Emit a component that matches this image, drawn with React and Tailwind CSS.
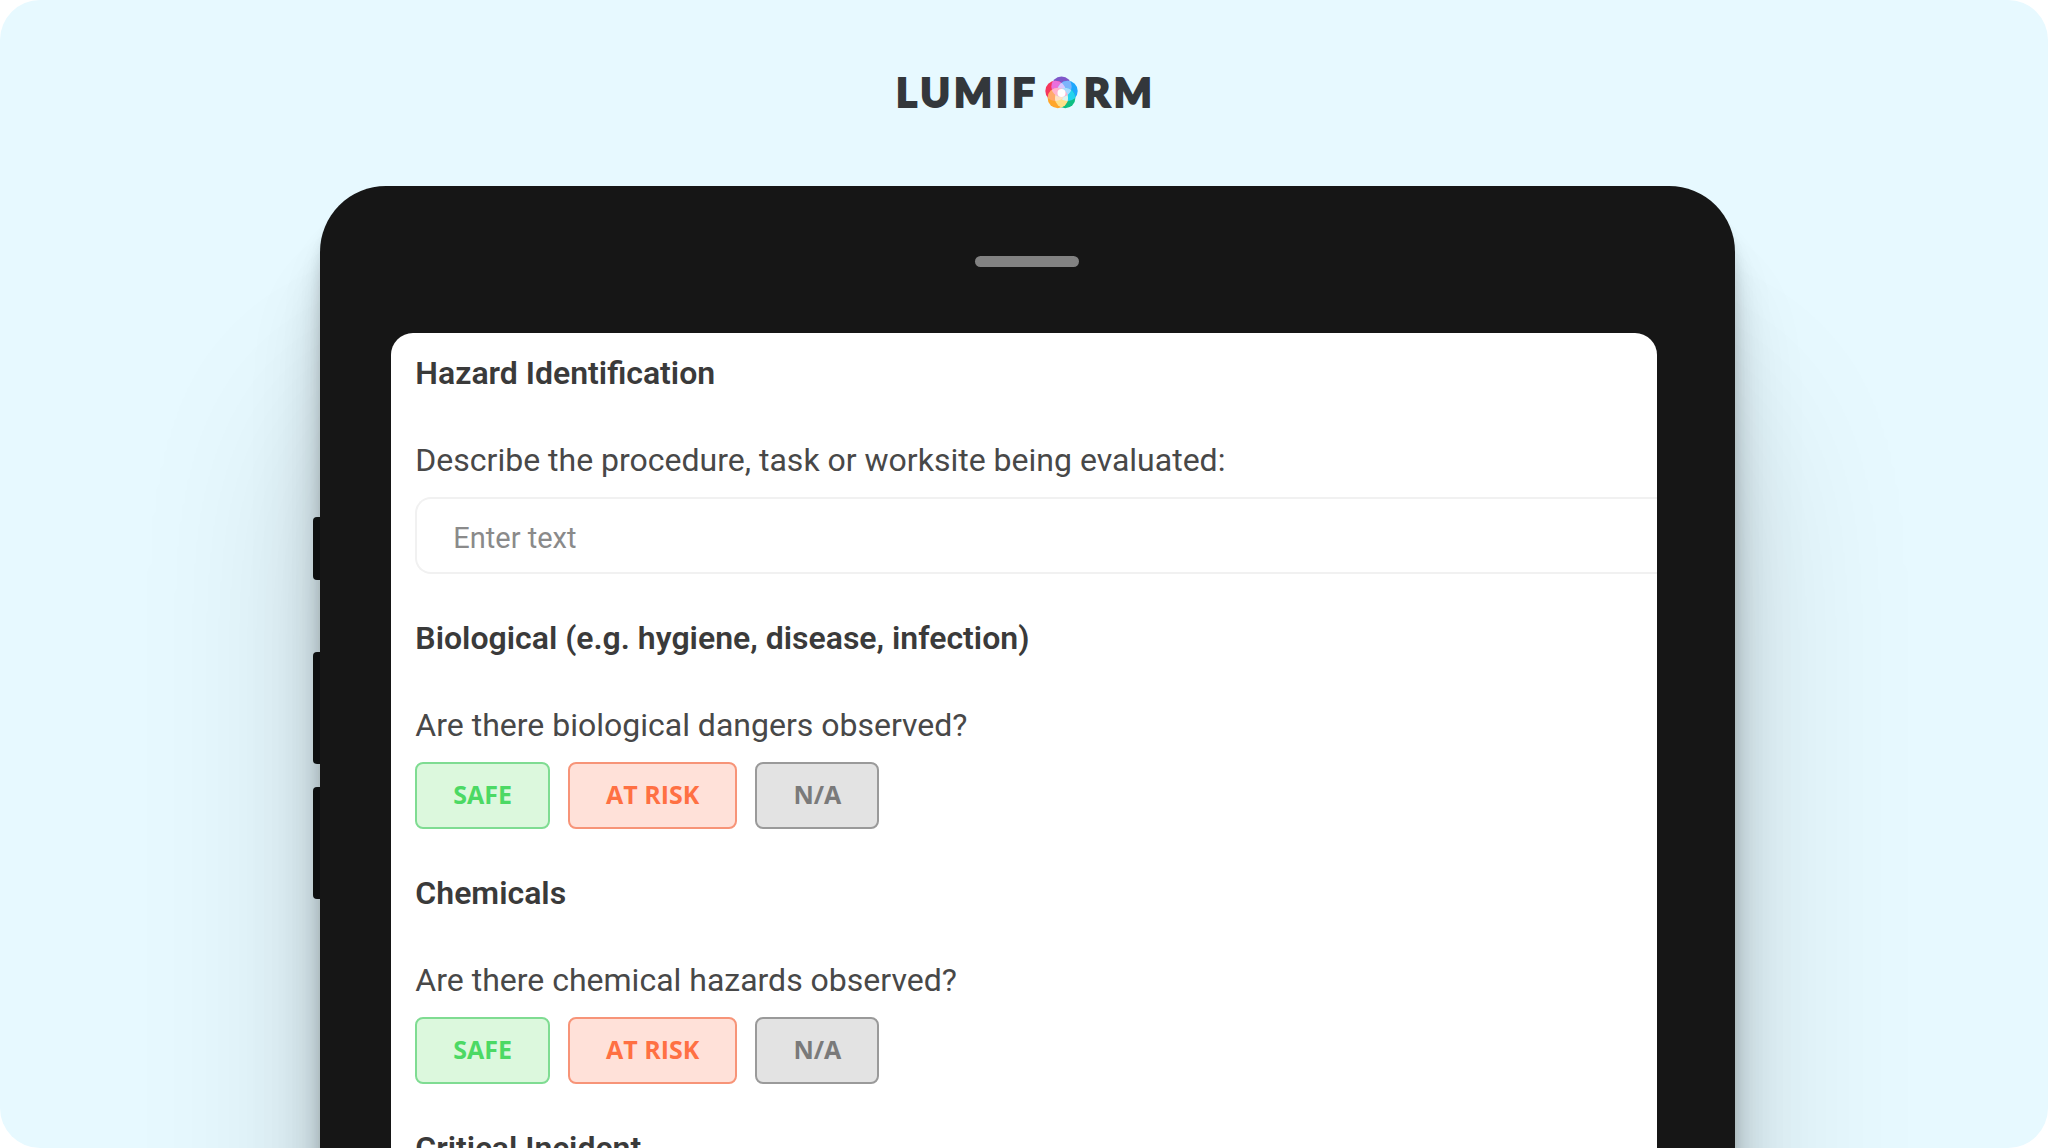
import React, { useState } from "react";

const answers = [
    {
        label: "SAFE",
        style: "border-[#7fdc92] bg-[#dcf8dd] text-[#4cd964]",
    },
    {
        label: "AT RISK",
        style: "border-[#f79478] bg-[#ffe1d9] text-[#ff7043]",
    },
    {
        label: "N/A",
        style: "border-[#9a9a9a] bg-[#e3e3e3] text-[#7a7a7a]",
    },
];

const sections = [
    {
        title: "Hazard Identification",
        question: "Describe the procedure, task or worksite being evaluated:",
        type: "text",
    },
    {
        title: "Biological (e.g. hygiene, disease, infection)",
        question: "Are there biological dangers observed?",
        type: "choice",
    },
    {
        title: "Chemicals",
        question: "Are there chemical hazards observed?",
        type: "choice",
    },
    {
        title: "Critical Incident",
    },
];

function LogoMark() {
    return (
        <svg viewBox="0 0 33 33" className="h-[33px] w-[33px]" aria-hidden="true">
            <clipPath id="petal-top">
                <circle cx="16.5" cy="10.7" r="10.2" />
            </clipPath>
            <clipPath id="petal-left">
                <circle cx="10.5" cy="15" r="10.2" />
            </clipPath>
            <clipPath id="petal-right">
                <circle cx="22.5" cy="15" r="10.2" />
            </clipPath>
            <clipPath id="petal-green">
                <circle cx="20.2" cy="22" r="10.2" />
            </clipPath>
            <circle cx="16.5" cy="10.7" r="10.2" fill="#7e57c9" />
            <circle cx="10.5" cy="15" r="10.2" fill="#f5365c" />
            <circle cx="22.5" cy="15" r="10.2" fill="#1ea7fd" />
            <circle cx="20.2" cy="22" r="10.2" fill="#0fbf83" />
            <circle cx="12.8" cy="22" r="10.2" fill="#ffa62b" />
            {/* Overlaps between neighbouring petals */}
            <circle cx="10.5" cy="15" r="10.2" fill="#ea6fdc" clipPath="url(#petal-top)" />
            <circle cx="22.5" cy="15" r="10.2" fill="#7cb4fb" clipPath="url(#petal-top)" />
            <circle cx="20.2" cy="22" r="10.2" fill="#22d3ee" clipPath="url(#petal-right)" />
            <circle cx="12.8" cy="22" r="10.2" fill="#ffa96b" clipPath="url(#petal-left)" />
            <circle cx="12.8" cy="22" r="10.2" fill="#fde08a" clipPath="url(#petal-green)" />
            {/* Paler overlaps of three petals */}
            <g clipPath="url(#petal-right)">
                <circle cx="12.8" cy="22" r="10.2" fill="#d9f5ee" />
                <circle cx="10.5" cy="15" r="10.2" fill="#d9c8ff" />
            </g>
            <g clipPath="url(#petal-left)">
                <circle cx="20.2" cy="22" r="10.2" fill="#ffe2c4" />
            </g>
            <g clipPath="url(#petal-top)">
                <circle cx="20.2" cy="22" r="10.2" fill="#a9dcff" />
                <circle cx="12.8" cy="22" r="10.2" fill="#ffb3cf" />
            </g>
            <circle cx="16.5" cy="17" r="4" fill="#fff" />
        </svg>
    );
}

function Logo() {
    return (
        <div className="flex items-center pb-0.5 pl-1 font-['Lato'] text-[40px] leading-[48px] font-black text-[#33373b] [-webkit-text-stroke:2px_#33373b]">
            <span className="mr-1.5 tracking-widest">LUMIF</span>
            <LogoMark />
            <span className="ml-1.5 tracking-widest">RM</span>
        </div>
    );
}

function AnswerButtons({ labelledBy }) {
    const [selected, setSelected] = useState(null);

    return (
        <div role="group" aria-labelledby={labelledBy} className="mt-[17px] flex gap-[18px]">
            {answers.map((answer) => (
                <button
                    key={answer.label}
                    type="button"
                    aria-pressed={selected === answer.label}
                    onClick={() => setSelected(answer.label)}
                    className={`h-[67px] rounded-lg border-2 px-9 pb-1 font-['Open_Sans'] text-[25px] leading-8 font-bold ${answer.style}`}
                >
                    {answer.label}
                </button>
            ))}
        </div>
    );
}

function Section({ section, index }) {
    const [text, setText] = useState("");
    const id = `question-${index}`;

    return (
        <section>
            <h2 className="text-[32px] leading-10 font-semibold">{section.title}</h2>

            {section.type === "text" && (
                <div className="mt-[47px] flex flex-col">
                    <label htmlFor={id} className="text-[32px] leading-10 text-[#484848]">
                        {section.question}
                    </label>
                    <input
                        id={id}
                        type="text"
                        value={text}
                        onChange={(e) => setText(e.target.value)}
                        placeholder="Enter text"
                        className="mt-[17px] h-[77px] rounded-l-2xl border-2 border-r-0 border-[#f1f1f1] px-9 pt-1 text-[29px] outline-none placeholder:text-[#8a8a8a]"
                    />
                </div>
            )}

            {section.type === "choice" && (
                <div className="mt-[47px]">
                    <p id={id} className="text-[32px] leading-10 text-[#484848]">
                        {section.question}
                    </p>
                    <AnswerButtons labelledBy={id} />
                </div>
            )}
        </section>
    );
}

function Tablet() {
    return (
        <div className="mx-auto flex w-[69.4%] shrink-0">
            {/* Side keys */}
            <div className="flex w-[7px] flex-col pt-[331px]">
                <div className="h-[63px] rounded-l-sm bg-[#121617]" />
                <div className="mt-[72px] h-28 rounded-l-sm bg-[#121617]" />
                <div className="mt-[23px] h-28 rounded-l-sm bg-[#121617]" />
            </div>

            <div className="flex min-h-[1800px] min-w-0 flex-1 flex-col rounded-[66px] bg-[#161616] pt-[70px] pb-36 shadow-[0_224px_190px_rgba(0,0,0,0.14),0_94px_76px_rgba(0,0,0,0.12),0_50px_40px_rgba(0,0,0,0.1),0_28px_22px_rgba(0,0,0,0.09),0_15px_12px_rgba(0,0,0,0.08)]">
                <div className="mx-auto h-[11px] w-[104px] rounded-full bg-[#828282]" />
                <main className="mt-[66px] mr-[78px] ml-[71px] flex flex-1 flex-col gap-11 overflow-hidden rounded-[22px] bg-white pt-5 pl-6 font-['Roboto'] text-[#3a3a3a]">
                    {sections.map((section, index) => (
                        <Section key={section.title} section={section} index={index} />
                    ))}
                </main>
            </div>
        </div>
    );
}

function App() {
    return (
        <div className="h-screen bg-white">
            <div className="flex h-full flex-col overflow-hidden rounded-[40px] bg-[#e7f9ff]">
                <header className="flex h-[186px] shrink-0 items-center justify-center">
                    <Logo />
                </header>
                <Tablet />
            </div>
        </div>
    );
}

export default App;
